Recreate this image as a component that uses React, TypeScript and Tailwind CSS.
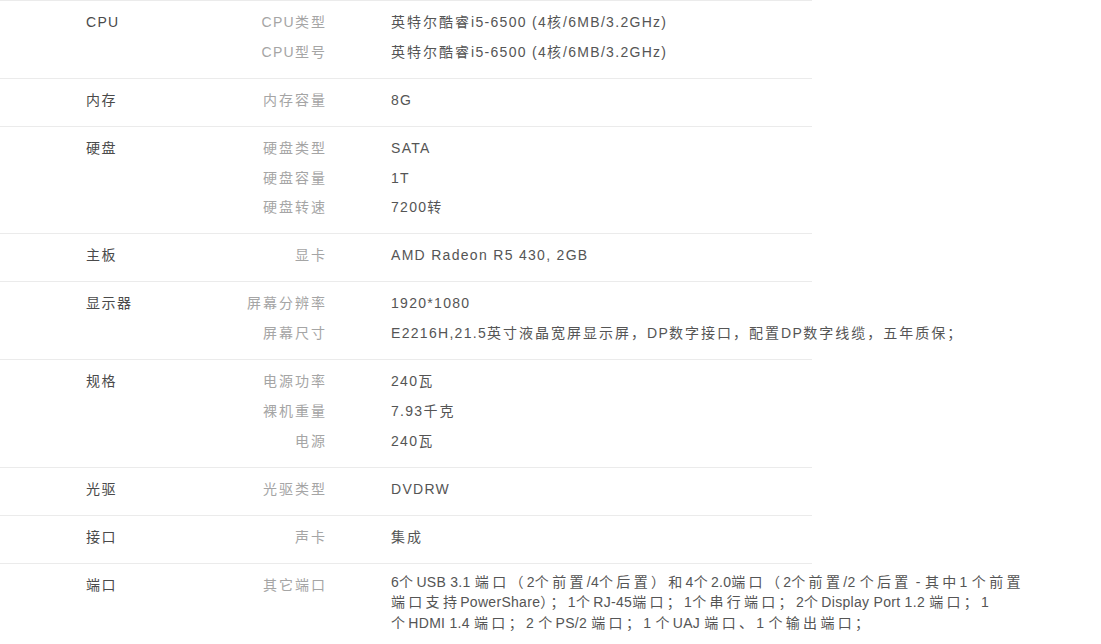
const groups: { name: string; items: [string, string][] }[] = [
  {
    name: "CPU",
    items: [
      ["CPU类型", "英特尔酷睿i5-6500 (4核/6MB/3.2GHz)"],
      ["CPU型号", "英特尔酷睿i5-6500 (4核/6MB/3.2GHz)"],
    ],
  },
  { name: "内存", items: [["内存容量", "8G"]] },
  {
    name: "硬盘",
    items: [
      ["硬盘类型", "SATA"],
      ["硬盘容量", "1T"],
      ["硬盘转速", "7200转"],
    ],
  },
  { name: "主板", items: [["显卡", "AMD Radeon R5 430, 2GB"]] },
  {
    name: "显示器",
    items: [
      ["屏幕分辨率", "1920*1080"],
      ["屏幕尺寸", "E2216H,21.5英寸液晶宽屏显示屏，DP数字接口，配置DP数字线缆，五年质保；"],
    ],
  },
  {
    name: "规格",
    items: [
      ["电源功率", "240瓦"],
      ["裸机重量", "7.93千克"],
      ["电源", "240瓦"],
    ],
  },
  { name: "光驱", items: [["光驱类型", "DVDRW"]] },
  { name: "接口", items: [["声卡", "集成"]] },
];

const portLines = [
  "6个USB 3.1 端口（2个前置/4个后置）和4个2.0端口（2个前置/2 个后置 - 其中1 个前置",
  "端口支持PowerShare）；1个RJ-45端口；1个串行端口；2个Display Port 1.2 端口；1",
  "个HDMI 1.4 端口；2 个PS/2 端口；1 个UAJ 端口、1 个输出端口；",
];

const font = "font-['Liberation_Sans','Noto_Sans_CJK_SC',sans-serif]";

// CJK glyphs on the page run wider than the latin ones, so space them apart
function Mixed({ text, cjk, latin }: { text: string; cjk: string; latin: string }) {
  const parts = text.split(/([\u3000-\u9fff\uff00-\uffef]+)/).filter(Boolean);
  return (
    <>
      {parts.map((p, i) => (
        <span key={i} className={/[\u3000-\u9fff\uff00-\uffef]/.test(p) ? cjk : latin}>
          {p}
        </span>
      ))}
    </>
  );
}

function Group({ name, items }: { name: string; items: [string, string][] }) {
  return (
    <div className="flex border-t border-[#ebebeb] pt-[7px] pb-[10.4px]">
      <div className="w-[200px] shrink-0 pl-[86px] text-[#4a4a4a] leading-[29.7px]">
        <Mixed text={name} cjk="tracking-[1.5px]" latin="tracking-[1.3px]" />
      </div>
      <div className="flex flex-col">
        {items.map(([label, value]) => (
          <div key={label} className="flex leading-[29.7px]">
            <div className="w-[127px] shrink-0 text-right text-[#a5a5a5]">
              <Mixed text={label} cjk="tracking-[2px]" latin="tracking-[1.3px]" />
            </div>
            <div className="pl-[64px] text-[#555] whitespace-nowrap">
              <Mixed text={value} cjk="tracking-[2px]" latin="tracking-[1.3px]" />
            </div>
          </div>
        ))}
      </div>
    </div>
  );
}

export default function App() {
  return (
    <div className={`min-h-screen bg-white text-[14px] ${font}`}>
      <div className="w-[812px]">
        {groups.map((g) => (
          <Group key={g.name} {...g} />
        ))}
        <div className="flex border-t border-[#ebebeb] pt-[7px] pb-[11px]">
          <div className="w-[200px] shrink-0 pl-[86px] text-[#4a4a4a] leading-[29.7px] tracking-[1.5px]">
            端口
          </div>
          <div className="w-[127px] shrink-0 text-right text-[#a5a5a5] leading-[29.7px] tracking-[2px]">
            其它端口
          </div>
          <div className="shrink-0 pl-[64px] pt-[1px] text-[#555] leading-[20.5px]">
            {portLines.map((line) => (
              <div key={line} className="whitespace-nowrap">
                <Mixed text={line} cjk="tracking-[3.3px]" latin="tracking-[0.3px]" />
              </div>
            ))}
          </div>
        </div>
      </div>
    </div>
  );
}
